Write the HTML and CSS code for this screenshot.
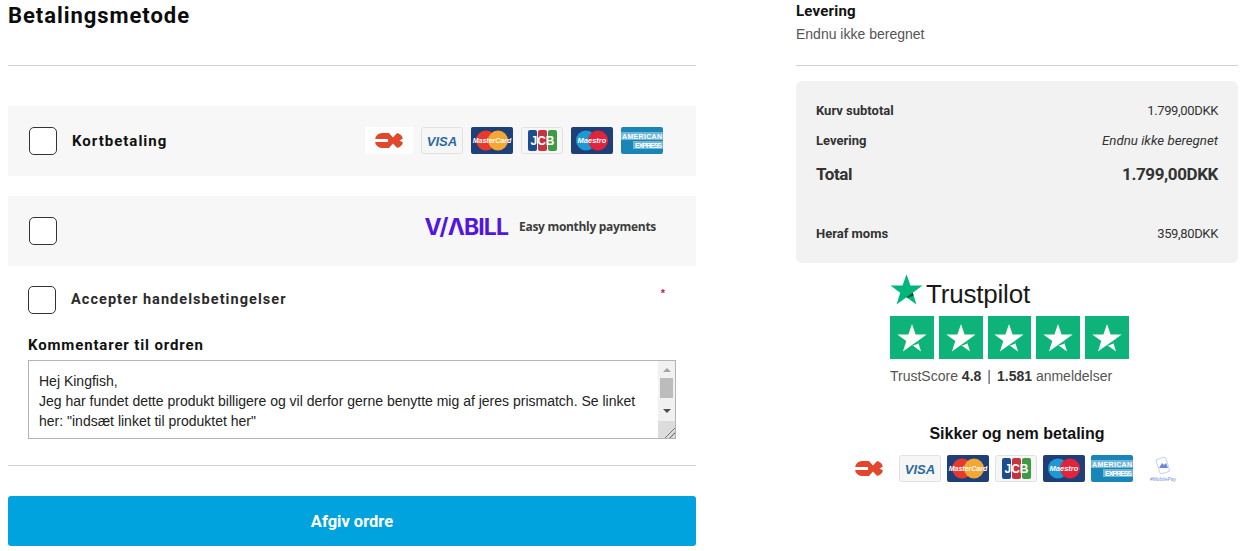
FILE: index.html
```html
<!DOCTYPE html>
<html>
<head>
    <title>Betalingsmetode</title>
    <link rel="stylesheet" href="styles.css">
</head>
<body>
    <svg class="sprite" xmlns="http://www.w3.org/2000/svg">
        <symbol id="dankort" viewBox="0 0 48 27">
            <rect width="48" height="27" fill="#fff"/>
            <rect x="10" y="6" width="28" height="15" rx="7" fill="#e2472c"/>
            <path d="M10 12h13v3h-13zM23 5h10l-5 5.500zM23 22h10l-5-5.500zM34.500 13.500l4.500-2.500v5z" fill="#fff"/>
        </symbol>
        <symbol id="tp-star" viewBox="0 0 24 24">
            <polygon points="12,1.500 14.700,9.300 23,9.300 16.300,14.200 18.800,22.200 12,17.300 5.200,22.200 7.700,14.200 1,9.300 9.300,9.300"/>
            <polygon points="16.300,14.200 16.900,16.100 12.600,17.800 12,17.300" fill="currentColor"/>
        </symbol>
    </svg>

    <div class="page">
        <main class="checkout">
            <h1 class="section-title">Betalingsmetode</h1>
            <hr class="rule rule-title">

            <div class="pay-row pay-row-card">
                <span class="check"></span>
                <span class="pay-label">Kortbetaling</span>
                <div class="card-list">
                    <svg class="card card-dk"><use href="#dankort"/></svg>
                    <svg class="card" viewBox="0 0 42 27">
                        <rect x=".5" y=".5" width="41" height="26" rx="2" fill="#f6f6f6" stroke="#e2e2e2"/>
                        <text x="21" y="18.500" text-anchor="middle" class="logo-text" font-size="13" font-style="italic" fill="#2a6a9e">VISA</text>
                    </svg>
                    <svg class="card" viewBox="0 0 42 27">
                        <rect width="42" height="27" rx="2" fill="#1f3f78"/>
                        <circle cx="15" cy="13.500" r="10" fill="#e8392c"/>
                        <circle cx="27" cy="13.500" r="10" fill="#f4a733"/>
                        <text x="21" y="16" text-anchor="middle" class="logo-text" font-size="7" font-style="italic" fill="#fff">MasterCard</text>
                    </svg>
                    <svg class="card" viewBox="0 0 42 27">
                        <rect x=".5" y=".5" width="41" height="26" rx="2" fill="#f6f6f6" stroke="#e2e2e2"/>
                        <rect x="7" y="3" width="9" height="21" rx="2" fill="#1d4d8c"/>
                        <rect x="17" y="3" width="9" height="21" rx="2" fill="#c5343f"/>
                        <rect x="27" y="3" width="9" height="21" rx="2" fill="#3c9c46"/>
                        <text x="21.500" y="18" text-anchor="middle" class="logo-text" font-size="12" fill="#fff">JCB</text>
                    </svg>
                    <svg class="card" viewBox="0 0 42 27">
                        <rect width="42" height="27" rx="2" fill="#1f3f78"/>
                        <circle cx="15" cy="13.500" r="10" fill="#1d9ad6"/>
                        <circle cx="27" cy="13.500" r="10" fill="#e0243c"/>
                        <text x="21" y="16" text-anchor="middle" class="logo-text" font-size="7.500" font-style="italic" fill="#fff">Maestro</text>
                    </svg>
                    <svg class="card" viewBox="0 0 42 27">
                        <rect width="42" height="27" rx="2" fill="#1a86b8"/>
                        <rect y="5" width="42" height="8" fill="#6fb6d6"/>
                        <rect x="12" y="14" width="30" height="8" fill="#6fb6d6"/>
                        <text x="1" y="11.500" class="logo-text" font-size="7" fill="#fff" textLength="40">AMERICAN</text>
                        <text x="14" y="20.500" class="logo-text" font-size="7" fill="#fff" textLength="27">EXPRESS</text>
                    </svg>
                </div>
            </div>

            <div class="pay-row pay-row-viabill">
                <span class="check"></span>
                <div class="viabill">
                    <span class="viabill-name">V/ΛBILL</span>
                    <span class="viabill-text">Easy monthly payments</span>
                </div>
            </div>

            <div class="terms">
                <span class="check"></span>
                <span class="terms-label">Accepter handelsbetingelser</span>
                <span class="required">*</span>
            </div>

            <label class="comment-label" for="comment">Kommentarer til ordren</label>
            <div class="comment-box">
                <textarea id="comment" class="comment-input">Hej Kingfish,
Jeg har fundet dette produkt billigere og vil derfor gerne benytte mig af jeres prismatch. Se linket her: "indsæt linket til produktet her"</textarea>
                <div class="scrollbar">
                    <span class="arrow-up"></span>
                    <span class="thumb"></span>
                    <span class="arrow-down"></span>
                    <span class="resizer"></span>
                </div>
            </div>

            <hr class="rule rule-comment">
            <button type="button" class="submit">Afgiv ordre</button>
        </main>

        <aside class="summary">
            <div class="delivery-title">Levering</div>
            <div class="delivery-text">Endnu ikke beregnet</div>
            <hr class="rule rule-delivery">

            <div class="totals">
                <div class="line">
                    <span class="line-name">Kurv subtotal</span>
                    <span class="line-value">1.799,00DKK</span>
                </div>
                <div class="line">
                    <span class="line-name">Levering</span>
                    <span class="line-italic">Endnu ikke beregnet</span>
                </div>
                <div class="line line-total">
                    <span>Total</span>
                    <span>1.799,00DKK</span>
                </div>
                <div class="line line-vat">
                    <span class="line-name">Heraf moms</span>
                    <span class="line-value">359,80DKK</span>
                </div>
            </div>

            <div class="trustpilot">
                <div class="tp-brand">
                    <svg class="tp-logo-star"><use href="#tp-star"/></svg>
                    <span>Trustpilot</span>
                </div>
                <div class="tp-stars">
                    <span class="tp-box"><svg class="tp-box-star"><use href="#tp-star"/></svg></span>
                    <span class="tp-box"><svg class="tp-box-star"><use href="#tp-star"/></svg></span>
                    <span class="tp-box"><svg class="tp-box-star"><use href="#tp-star"/></svg></span>
                    <span class="tp-box"><svg class="tp-box-star"><use href="#tp-star"/></svg></span>
                    <span class="tp-box"><svg class="tp-box-star"><use href="#tp-star"/></svg></span>
                </div>
                <div class="tp-score">TrustScore <b>4.8</b><span class="tp-sep">|</span><b>1.581</b> anmeldelser</div>
            </div>

            <div class="secure-title">Sikker og nem betaling</div>
            <div class="secure-list">
                <svg class="card card-dk"><use href="#dankort"/></svg>
                <svg class="card" viewBox="0 0 42 27">
                    <rect x=".5" y=".5" width="41" height="26" rx="2" fill="#f6f6f6" stroke="#e2e2e2"/>
                    <text x="21" y="18.500" text-anchor="middle" class="logo-text" font-size="13" font-style="italic" fill="#2a6a9e">VISA</text>
                </svg>
                <svg class="card" viewBox="0 0 42 27">
                    <rect width="42" height="27" rx="2" fill="#1f3f78"/>
                    <circle cx="15" cy="13.500" r="10" fill="#e8392c"/>
                    <circle cx="27" cy="13.500" r="10" fill="#f4a733"/>
                    <text x="21" y="16" text-anchor="middle" class="logo-text" font-size="7" font-style="italic" fill="#fff">MasterCard</text>
                </svg>
                <svg class="card" viewBox="0 0 42 27">
                    <rect x=".5" y=".5" width="41" height="26" rx="2" fill="#f6f6f6" stroke="#e2e2e2"/>
                    <rect x="7" y="3" width="9" height="21" rx="2" fill="#1d4d8c"/>
                    <rect x="17" y="3" width="9" height="21" rx="2" fill="#c5343f"/>
                    <rect x="27" y="3" width="9" height="21" rx="2" fill="#3c9c46"/>
                    <text x="21.500" y="18" text-anchor="middle" class="logo-text" font-size="12" fill="#fff">JCB</text>
                </svg>
                <svg class="card" viewBox="0 0 42 27">
                    <rect width="42" height="27" rx="2" fill="#1f3f78"/>
                    <circle cx="15" cy="13.500" r="10" fill="#1d9ad6"/>
                    <circle cx="27" cy="13.500" r="10" fill="#e0243c"/>
                    <text x="21" y="16" text-anchor="middle" class="logo-text" font-size="7.500" font-style="italic" fill="#fff">Maestro</text>
                </svg>
                <svg class="card" viewBox="0 0 42 27">
                    <rect width="42" height="27" rx="2" fill="#1a86b8"/>
                    <rect y="5" width="42" height="8" fill="#6fb6d6"/>
                    <rect x="12" y="14" width="30" height="8" fill="#6fb6d6"/>
                    <text x="1" y="11.500" class="logo-text" font-size="7" fill="#fff" textLength="40">AMERICAN</text>
                    <text x="14" y="20.500" class="logo-text" font-size="7" fill="#fff" textLength="27">EXPRESS</text>
                </svg>
                <div class="mobilepay">
                    <svg class="mobilepay-icon" viewBox="0 0 20 20" xmlns="http://www.w3.org/2000/svg">
                        <rect x="5" y="2" width="10" height="15" rx="2" transform="rotate(-18 10 10)" fill="#fff" stroke="#c9d2f2"/>
                        <path d="M6 12l3-5 2 2 2-2 2 5z" fill="#6f86dd"/>
                    </svg>
                    <span>#MobilePay</span>
                </div>
            </div>
        </aside>
    </div>
</body>
</html>
```

FILE: styles.css
```css
body {
    margin: 0;
    font-family: "Liberation Sans", Arial, sans-serif;
    background-color: #fff;
    color: #111;
}

.sprite {
    position: absolute;
    width: 0;
    height: 0;
}

.page {
    display: flex;
    gap: 100px;
    padding-left: 8px;
}

.checkout {
    width: 688px;
}

.summary {
    width: 442px;
}

.rule {
    height: 1px;
    margin: 0;
    border: none;
    background-color: #d2d2d2;
}

.section-title {
    margin: 0;
    padding-top: 3px;
    font-family: Roboto, sans-serif;
    font-size: 22px;
    line-height: 26px;
    font-weight: 700;
    letter-spacing: .95px;
    color: #0c0c0c;
}

.rule-title {
    margin-top: 36px;
}

.pay-row {
    display: flex;
    align-items: center;
    height: 70px;
    padding-left: 21px;
    background-color: #f7f7f7;
}

.pay-row-card {
    margin-top: 40px;
}

.pay-row-viabill {
    margin-top: 20px;
}

.check {
    flex: none;
    box-sizing: border-box;
    width: 28px;
    height: 28px;
    border: 1px solid #333;
    border-radius: 5px;
    background-color: #fff;
}

.pay-label {
    margin-left: 15px;
    font-family: Roboto, sans-serif;
    font-size: 15px;
    font-weight: 700;
    letter-spacing: 1px;
}

.card-list {
    display: flex;
    gap: 8px;
    margin-left: auto;
    margin-right: 33px;
    margin-bottom: 2px;
}

.card {
    flex: none;
    width: 42px;
    height: 27px;
}

.card-dk {
    width: 48px;
}

.logo-text {
    font-family: "Liberation Sans", Arial, sans-serif;
    font-weight: 700;
}

.viabill {
    display: flex;
    align-items: center;
    margin-left: auto;
    margin-right: 40px;
    margin-top: -9px;
}

.viabill-name {
    font-family: Inter, sans-serif;
    font-size: 23px;
    font-weight: 700;
    letter-spacing: -.9px;
    color: #5316e0;
}

.viabill-text {
    margin-left: 11px;
    font-family: "Open Sans", sans-serif;
    font-size: 12px;
    font-weight: 700;
    letter-spacing: -.3px;
    color: #3d3d3d;
}

.terms {
    display: flex;
    align-items: center;
    height: 28px;
    margin-top: 20px;
    padding-left: 20px;
}

.terms-label {
    margin-left: 15px;
    margin-bottom: 2px;
    font-family: Roboto, sans-serif;
    font-size: 14.500px;
    font-weight: 700;
    letter-spacing: 1.05px;
    color: #2b2b2b;
}

.required {
    margin-left: auto;
    margin-right: 31px;
    margin-top: -14px;
    font-size: 11px;
    font-weight: 700;
    color: #c0284f;
}

.comment-label {
    display: block;
    margin-top: 22px;
    padding-left: 20px;
    font-family: Roboto, sans-serif;
    font-size: 15px;
    line-height: 18px;
    font-weight: 700;
    letter-spacing: .85px;
}

.comment-box {
    display: flex;
    box-sizing: border-box;
    width: 648px;
    height: 79px;
    margin-top: 6px;
    margin-left: 20px;
    border: 1px solid #b4b4b4;
}

.comment-input {
    flex: 1;
    padding: 10px 10px 0;
    border: none;
    outline: none;
    resize: none;
    overflow: hidden;
    font-family: "Liberation Sans", Arial, sans-serif;
    font-size: 14px;
    line-height: 20px;
    color: #222;
}

.scrollbar {
    display: flex;
    flex-direction: column;
    align-items: center;
    width: 17px;
    background-color: #f1f1f1;
}

.arrow-up {
    margin-top: 7px;
    border-left: 4px solid transparent;
    border-right: 4px solid transparent;
    border-bottom: 4px solid #a3a3a3;
}

.thumb {
    width: 13px;
    height: 20px;
    margin-top: 6px;
    background-color: #bcbcbc;
}

.arrow-down {
    margin-top: 11px;
    border-left: 4px solid transparent;
    border-right: 4px solid transparent;
    border-top: 4px solid #505050;
}

.resizer {
    width: 17px;
    height: 17px;
    margin-top: auto;
    background: linear-gradient(135deg, #dcdcdc 68%, #777 69%, #777 72%, #dcdcdc 73%, #dcdcdc 82%, #777 83%, #777 86%, #dcdcdc 87%);
}

.rule-comment {
    margin-top: 26px;
}

.submit {
    display: block;
    width: 100%;
    height: 50px;
    margin-top: 30px;
    border: none;
    border-radius: 3px;
    background-color: #00a3de;
    color: #fff;
    font-family: Roboto, sans-serif;
    font-size: 16.500px;
    font-weight: 700;
    cursor: pointer;
}

.delivery-title {
    padding-top: 2px;
    font-family: Roboto, sans-serif;
    font-size: 15px;
    line-height: 18px;
    font-weight: 700;
    letter-spacing: .2px;
}

.delivery-text {
    margin-top: 5px;
    font-size: 14px;
    line-height: 18px;
    color: #555;
}

.rule-delivery {
    margin-top: 22px;
}

.totals {
    box-sizing: border-box;
    height: 182px;
    margin-top: 15px;
    padding: 17px 20px 0;
    border-radius: 6px;
    background-color: #f2f2f2;
    font-family: Roboto, sans-serif;
}

.line {
    display: flex;
    justify-content: space-between;
    align-items: center;
    height: 24px;
    margin-bottom: 6px;
    font-size: 13px;
    color: #333;
}

.line-name {
    font-weight: 700;
}

.line-value {
    letter-spacing: -.35px;
}

.line-italic {
    font-size: 13.300px;
    font-style: italic;
}

.line-total {
    height: 28px;
    margin-top: 8px;
    font-size: 17px;
    font-weight: 700;
    letter-spacing: -.4px;
}

.line-vat {
    margin-top: 33px;
}

.trustpilot {
    margin-top: 9px;
    margin-left: 94px;
}

.tp-brand {
    display: flex;
    align-items: center;
    height: 34px;
    font-size: 26px;
    letter-spacing: -.2px;
    color: #1a1a1a;
}

.tp-brand span {
    margin-left: 2px;
    padding-top: 11px;
}

.tp-logo-star {
    width: 35px;
    height: 35px;
    margin-left: -1px;
    fill: #00b67a;
    color: #005128;
}

.tp-stars {
    display: flex;
    gap: 5px;
    width: 239px;
    margin-top: 10px;
}

.tp-box {
    display: flex;
    flex: 1;
    align-items: center;
    justify-content: center;
    height: 43px;
    background-color: #0eb37a;
}

.tp-box-star {
    width: 32px;
    height: 32px;
    fill: #fff;
    color: #0eb37a;
}

.tp-score {
    margin-top: 9px;
    font-size: 14px;
    line-height: 17px;
    color: #555;
}

.tp-score b {
    color: #333;
}

.tp-sep {
    margin: 0 6px;
}

.secure-title {
    margin-top: 40px;
    text-align: center;
    font-size: 16px;
    line-height: 18px;
    font-weight: 700;
    color: #111;
}

.secure-list {
    display: flex;
    align-items: center;
    gap: 6px;
    margin-top: 12px;
    padding-left: 49px;
}

.mobilepay {
    display: flex;
    flex-direction: column;
    align-items: center;
    width: 32px;
    margin-left: 8px;
    font-size: 5px;
    color: #7b8fe0;
}

.mobilepay-icon {
    width: 20px;
    height: 20px;
}
```
